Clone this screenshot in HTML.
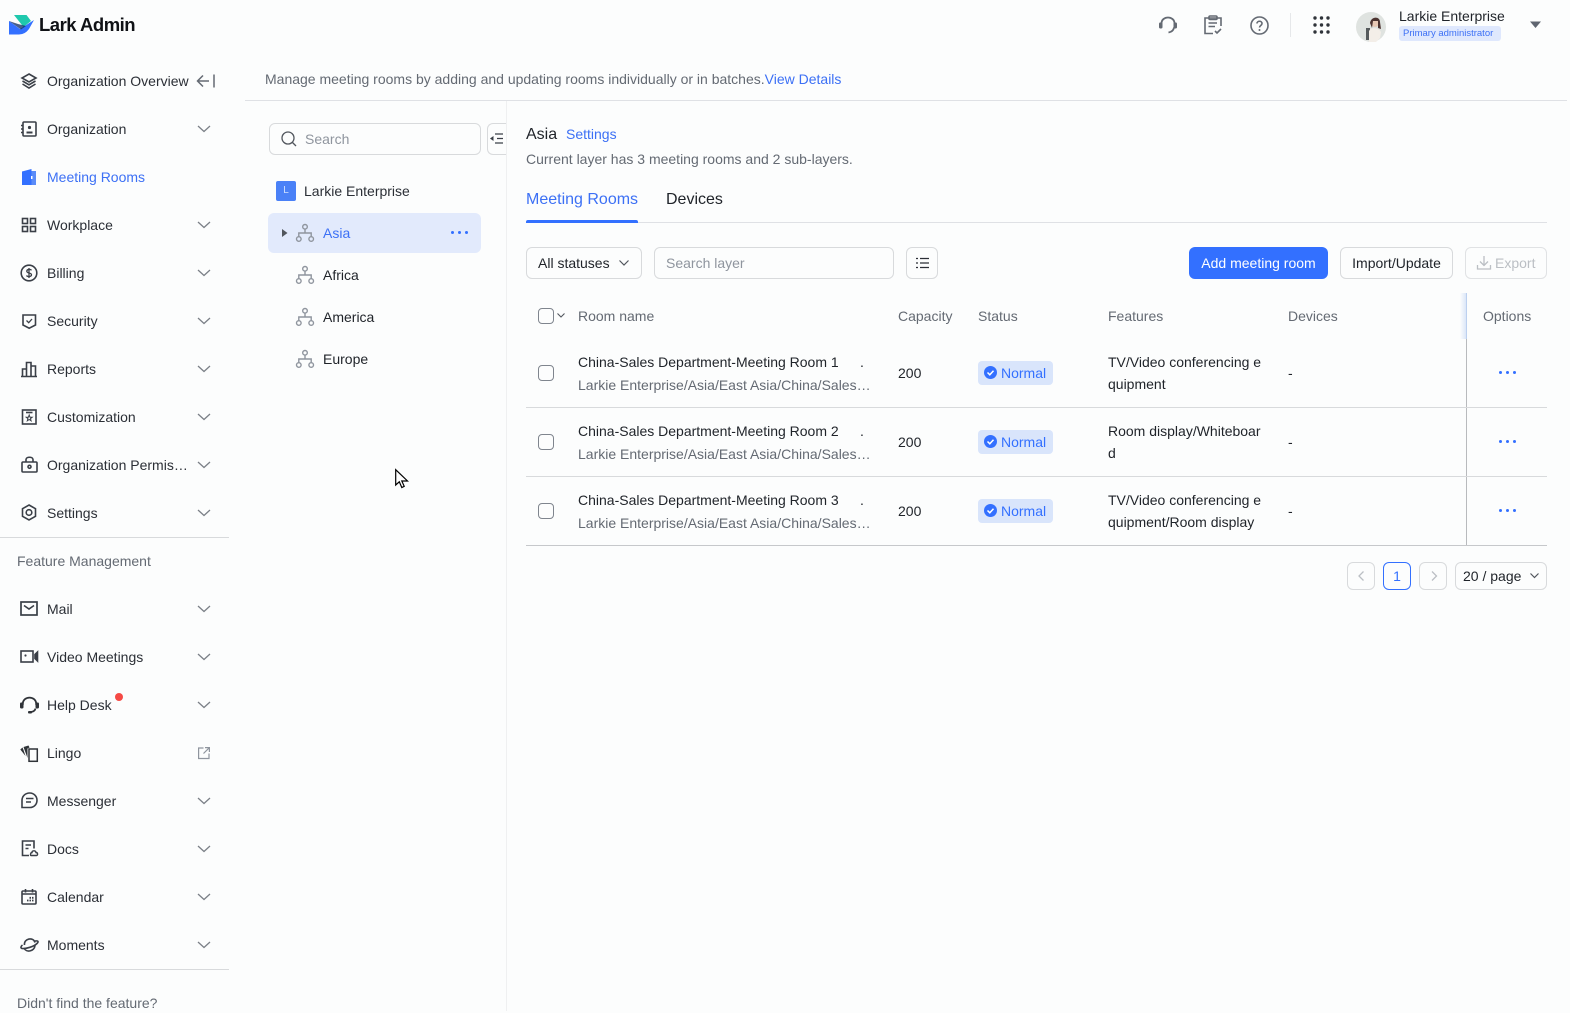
<!DOCTYPE html>
<html><head><meta charset="utf-8"><style>
*{box-sizing:border-box}
html,body{margin:0;padding:0}
body{width:1570px;height:1011px;overflow:hidden;background:#fcfdfd;font:14px/20px "Liberation Sans",sans-serif;color:#1f2329;position:relative}
.a{position:absolute;white-space:nowrap}
svg{position:absolute;overflow:visible}
.m{left:47px;color:#2b2f36}
.g{color:#646a73}
.bd{position:absolute;border:1px solid #d8dadc;border-radius:6px;background:#fcfdfd}
.i{fill:none;stroke:#3a3f47;stroke-width:1.6}
.ch{fill:none;stroke:#7b8087;stroke-width:1.3}
.tree{fill:none;stroke:#8f959e;stroke-width:1.4}
.st{position:absolute;left:978px;width:75px;height:24px;background:#d9e5fb;border-radius:4px;color:#3370ff;padding:2px 0 0 23px}
.dots{position:absolute;display:flex;gap:4px}
.dots i{width:3px;height:3px;border-radius:50%;background:#3370ff;display:block}
.hl{position:absolute;height:1px;background:#d8dadc}
.cb{position:absolute;left:538px;width:16px;height:16px;border:1px solid #7f858e;border-radius:4px}
</style></head><body>

<!-- logo -->
<svg style="left:9px;top:15px" width="26" height="20" viewBox="0 0 26 20"><path d="M5 0H17.5L22 6 14.5 12Z" fill="#1fc8ad"/><path d="M0 6 11 14 25 5 20 14Q16 19.5 10 19.5H0Z" fill="#3370ff"/><path d="M0 6 12 14.500 17 11 9 9Z" fill="#0b2a63" opacity=".75"/></svg>
<div class="a" style="left:39px;top:13px;font-size:18.500px;line-height:24px;font-weight:700;color:#101216;letter-spacing:-.5px">Lark Admin</div>

<!-- nav -->
<svg style="left:21px;top:73px" width="16" height="16" viewBox="0 0 16 16" class="i"><path d="M8 1 15 5 8 9 1 5Z M1.500 8 8 11.800 14.500 8 M1.500 11 8 15 14.500 11"/></svg>
<div class="a m" style="top:71px">Organization Overview</div>
<svg style="left:196px;top:73px" width="20" height="16" viewBox="0 0 20 16" fill="none" stroke="#646a73" stroke-width="1.500"><path d="M13 8H1.500M7 2.500 1.500 8 7 13.500M18 1.500V14.500"/></svg>

<svg style="left:21px;top:121px" width="16" height="16" viewBox="0 0 16 16" class="i"><rect x="2" y="1" width="13" height="14" rx="1"/><circle cx="8.500" cy="6.500" r="1.600" fill="#3a3f47" stroke="none"/><path d="M5.500 11.500h6" stroke-width="2"/><path d="M0 4.500h2.500M0 8h2.500M0 11.500h2.500"/></svg>
<div class="a m" style="top:119px">Organization</div>

<svg style="left:22px;top:169px" width="14" height="16" viewBox="0 0 14 16"><path d="M0 2.500 9.500 0V16H0Z" fill="#3370ff"/><path d="M9.500 2H14V16H9.500Z" fill="#5b8cf8"/><rect x="9" y="7" width="1.500" height="3" fill="#fff"/></svg>
<div class="a" style="left:47px;top:167px;color:#3c70f5">Meeting Rooms</div>

<svg style="left:21px;top:217px" width="16" height="16" viewBox="0 0 16 16" class="i"><rect x="1.500" y="1.500" width="5" height="5"/><rect x="9.500" y="1.500" width="5" height="5"/><rect x="1.500" y="9.500" width="5" height="5"/><rect x="9.500" y="9.500" width="5" height="5"/></svg>
<div class="a m" style="top:215px">Workplace</div>

<svg style="left:20px;top:264px" width="18" height="18" viewBox="0 0 18 18" class="i"><circle cx="9" cy="9" r="7.800"/><path d="M11.500 6.300C10.500 5 6.800 5 6.800 7.200 6.800 9.500 11.500 8.500 11.500 10.800 11.500 13 7.500 13 6.500 11.500M9 4V14" stroke-width="1.300"/></svg>
<div class="a m" style="top:263px">Billing</div>

<svg style="left:21px;top:313px" width="16" height="16" viewBox="0 0 16 16" class="i"><path d="M2 2H14.500V12L8.200 15.200 2 12Z"/><path d="M5.500 7.500 7.700 9.700 11 6" stroke-width="1.300"/></svg>
<div class="a m" style="top:311px">Security</div>

<svg style="left:21px;top:361px" width="16" height="16" viewBox="0 0 16 16" class="i"><path d="M0 15.500H16M1.500 15V8H5.500V15M5.500 15V1.500H10V15M10 5H14.500V15"/></svg>
<div class="a m" style="top:359px">Reports</div>

<svg style="left:21px;top:409px" width="16" height="16" viewBox="0 0 16 16" class="i"><rect x="1.500" y="1" width="13.500" height="14"/><path d="M5 3.500H11.500" /><path d="M8.200 6 9 8.200H11.200L9.500 9.600 10.100 11.800 8.200 10.500 6.300 11.800 6.900 9.600 5.200 8.200H7.400Z" stroke-width="1"/></svg>
<div class="a m" style="top:407px">Customization</div>

<svg style="left:21px;top:456px" width="17" height="17" viewBox="0 0 17 17" class="i"><rect x="1" y="6" width="15" height="10" rx="1"/><path d="M5 6V3.500C5 .500 12 .500 12 3.500V6"/><circle cx="8.500" cy="10.800" r="1.500"/></svg>
<div class="a m" style="top:455px;width:141px;overflow:hidden;text-overflow:ellipsis">Organization Permissions</div>

<svg style="left:21px;top:504px" width="16" height="17" viewBox="0 0 16 17" class="i"><path d="M8 1 14.500 4.700V12.300L8 16 1.500 12.300V4.700Z"/><circle cx="8" cy="8.500" r="2.800"/></svg>
<div class="a m" style="top:503px">Settings</div>

<div class="hl" style="left:0;top:537px;width:229px"></div>
<div class="a g" style="left:17px;top:551px">Feature Management</div>

<svg style="left:20px;top:601px" width="18" height="15" viewBox="0 0 18 15" class="i"><rect x="1" y="1" width="16" height="13" stroke-width="1.700"/><path d="M4 4.500 9 8 14 4.500"/></svg>
<div class="a m" style="top:599px">Mail</div>

<svg style="left:20px;top:650px" width="19" height="13" viewBox="0 0 19 13" class="i"><rect x="1" y="1" width="12" height="11"/><circle cx="5.500" cy="5.500" r="1.100" fill="#3a3f47" stroke="none"/><path d="M15 4.500 17.500 2V11L15 8.500Z" fill="#3a3f47"/></svg>
<div class="a m" style="top:647px">Video Meetings</div>

<svg style="left:20px;top:696px" width="19" height="18" viewBox="0 0 19 18" fill="none" stroke="#2f3338" stroke-width="1.800"><path d="M2.800 9V8C2.800 -.5 16.200 -.5 16.200 8V9"/><path d="M15.500 12.500C15 15 13 16 9.500 16"/><rect x="0" y="6.500" width="3.500" height="6" rx="1.200" fill="#2f3338" stroke="none"/><rect x="15.500" y="6.500" width="3.500" height="6" rx="1.200" fill="#2f3338" stroke="none"/><rect x="8" y="15" width="4" height="2.500" rx="1" fill="#2f3338" stroke="none"/></svg>
<div class="a m" style="top:695px">Help Desk</div>
<div class="a" style="left:115px;top:693px;width:8px;height:8px;border-radius:50%;background:#f54a45"></div>

<svg style="left:20px;top:745px" width="18" height="17" viewBox="0 0 18 17"><rect x="9" y="4" width="8.300" height="12.300" fill="none" stroke="#2f3338" stroke-width="1.500"/><path d="M8.500 .5 3.500 2 7.500 13 7.500 3.500 9.500 2.500Z M2.500 2.500 .3 4.500 5.500 11 3.500 5Z" fill="#2f3338"/></svg>
<div class="a m" style="top:743px">Lingo</div>
<svg style="left:198px;top:747px" width="12" height="12" viewBox="0 0 12 12" fill="none" stroke="#8f959e" stroke-width="1.200"><path d="M5.500 1H.6V11.500H11V6.500M7 .6H11.400V5M11.200 .8 5.500 6.500"/></svg>

<svg style="left:21px;top:792px" width="17" height="17" viewBox="0 0 17 17" class="i"><path d="M1 15.500V8.500C1 4 4.500 1 8.700 1 13 1 16 4.300 16 8.200 16 12.300 13 15.500 8.700 15.500Z"/><path d="M5 6.500H12.500M5 10H10"/></svg>
<div class="a m" style="top:791px">Messenger</div>

<svg style="left:21px;top:840px" width="17" height="17" viewBox="0 0 17 17" class="i"><path d="M8 15.500H1.500V1H13V8.500"/><path d="M4.500 5H10M4.500 8.500H7.500"/><path d="M10 15.500H15.500C17 15.500 17 12.500 15 12.500 14.500 10 11 10.500 11 12.500 9.500 12.500 9 15.500 10 15.500Z" stroke-width="1.400"/></svg>
<div class="a m" style="top:839px">Docs</div>

<svg style="left:21px;top:889px" width="16" height="16" viewBox="0 0 16 16" class="i"><rect x="1" y="2" width="14" height="13" rx="1"/><path d="M4.500 0V3.500M11.500 0V3.500M1 5H15"/><path d="M6 11.500H7.500M8.500 11.500H10M11 11.500H12.500M8.500 8.800H10M11 8.800H12.500" stroke-width="1.800"/></svg>
<div class="a m" style="top:887px">Calendar</div>

<svg style="left:20px;top:937px" width="19" height="16" viewBox="0 0 19 16" class="i"><path d="M4.500 8C3.500 1.500 13.500 -.5 15 5.500M15 8.500C14.500 14.500 6 16 4 11"/><path d="M15 4C18 3.500 19 4.500 17 6.500 14 9.500 6 12 2 11.500 .5 11 .5 9.500 2.500 8"/></svg>
<div class="a m" style="top:935px">Moments</div>

<div class="hl" style="left:0;top:969px;width:229px"></div>
<div class="a g" style="left:17px;top:993px">Didn't find the feature?</div>

<svg style="left:0;top:0" width="229" height="960" class="ch"><path d="M198 126l6 5.500 6-5.500M198 222l6 5.500 6-5.500M198 270l6 5.500 6-5.500M198 318l6 5.500 6-5.500M198 366l6 5.500 6-5.500M198 414l6 5.500 6-5.500M198 462l6 5.500 6-5.500M198 510l6 5.500 6-5.500M198 606l6 5.500 6-5.500M198 654l6 5.500 6-5.500M198 702l6 5.500 6-5.500M198 798l6 5.500 6-5.500M198 846l6 5.500 6-5.500M198 894l6 5.500 6-5.500M198 942l6 5.500 6-5.500"/></svg>

<!-- top bar -->
<svg style="left:1159px;top:16px" width="18" height="18" viewBox="0 0 18 18" fill="none" stroke="#646a73" stroke-width="1.800"><path d="M2.500 8V7.500C2.500 -.5 15.500 -.5 15.500 7.500V8"/><path d="M15 11.500C14.500 14.500 12.500 16 9.500 16.500"/><rect x="0" y="6.500" width="3.500" height="6" rx="1.200" fill="#646a73" stroke="none"/><rect x="14.500" y="6.500" width="3.500" height="6" rx="1.200" fill="#646a73" stroke="none"/></svg>
<svg style="left:1204px;top:15px" width="18" height="20" viewBox="0 0 18 20" fill="none" stroke="#646a73" stroke-width="1.600"><path d="M9 18.500H1V3H17V11"/><rect x="5" y="1" width="8" height="3.500" rx="1"/><path d="M4.500 8H13M4.500 11.500H11M11 16 13 18 17 14"/></svg>
<svg style="left:1250px;top:16px" width="19" height="19" viewBox="0 0 19 19" fill="none" stroke="#646a73" stroke-width="1.600"><circle cx="9.500" cy="9.500" r="8.500"/><path d="M7 7.500C7 4.500 12 4.500 12 7.500 12 9.500 9.500 9.500 9.500 11.500"/><circle cx="9.500" cy="14" r="1" fill="#646a73" stroke="none"/></svg>
<div class="a" style="left:1290px;top:13px;width:1px;height:24px;background:#e6e8ea"></div>
<svg style="left:1313px;top:16px" width="17" height="18" fill="#30343a"><circle cx="2" cy="2" r="1.700"/><circle cx="8.500" cy="2" r="1.700"/><circle cx="15" cy="2" r="1.700"/><circle cx="2" cy="9" r="1.700"/><circle cx="8.500" cy="9" r="1.700"/><circle cx="15" cy="9" r="1.700"/><circle cx="2" cy="16" r="1.700"/><circle cx="8.500" cy="16" r="1.700"/><circle cx="15" cy="16" r="1.700"/></svg>
<svg style="left:1356px;top:12px" width="30" height="30" viewBox="0 0 30 30"><circle cx="15" cy="15" r="15" fill="#dfe3e0"/><path d="M10 28V16H14V28Z" fill="#555a5c"/><path d="M13 30V19C15 15 22 15 25 20L24 26 20 30Z" fill="#f3eee8"/><circle cx="19" cy="11" r="4" fill="#e8c9b5"/><path d="M14 11C15 4 24 4 24 10L25 17 22 16 22 9 17 9 16 16Z" fill="#4c3431"/></svg>
<div class="a" style="left:1399px;top:6px">Larkie Enterprise</div>
<div class="a" style="left:1399px;top:26px;width:102px;height:15px;background:#dfe8fd;border-radius:3px;color:#3c70f5;font-size:9.500px;line-height:15px;padding-left:4px">Primary administrator</div>
<svg style="left:1530px;top:21px" width="12" height="8"><path d="M0 .5H11L5.500 7Z" fill="#5f6570"/></svg>

<!-- frame lines -->
<div class="hl" style="left:245px;top:100px;width:1322px;background:#dfe1e5"></div>
<div class="a" style="left:506px;top:101px;width:1px;height:910px;background:#eff0f1"></div>
<div class="a g" style="left:265px;top:69px">Manage meeting rooms by adding and updating rooms individually or in batches.<span style="color:#3c70f5">View Details</span></div>

<!-- tree -->
<div class="bd" style="left:269px;top:123px;width:212px;height:32px"></div>
<svg style="left:281px;top:131px" width="16" height="16" fill="none" stroke="#51565d" stroke-width="1.300"><circle cx="7" cy="7" r="6"/><path d="M11.500 11.500 15 15"/></svg>
<div class="a" style="left:305px;top:129px;color:#8f959e">Search</div>
<div class="bd" style="left:487px;top:123px;width:19px;height:32px;border-right:0;border-radius:6px 0 0 6px"></div>
<svg style="left:490px;top:133px" width="13" height="12" stroke="#3a3f47" stroke-width="1.300"><path d="M5 1H13M7 5.500H13M5 10H13"/><path d="M0 5.500 3.500 3V8Z" fill="#3a3f47" stroke="none"/></svg>

<div class="a" style="left:276px;top:181px;width:20px;height:20px;background:#4a81f7;border-radius:2px;color:#cfe0ff;font-size:10px;line-height:20px;text-align:center">L</div>
<div class="a" style="left:304px;top:181px;color:#2b2f36">Larkie Enterprise</div>

<div class="a" style="left:268px;top:213px;width:213px;height:40px;background:#e2eafc;border-radius:6px"></div>
<svg style="left:282px;top:229px" width="6" height="8"><path d="M0 0 5.500 4 0 8Z" fill="#51565d"/></svg>
<div class="a" style="left:323px;top:223px;color:#3c70f5">Asia</div>
<div class="dots" style="left:451px;top:231px"><i></i><i></i><i></i></div>

<div class="a" style="left:323px;top:265px">Africa</div>
<div class="a" style="left:323px;top:307px">America</div>
<div class="a" style="left:323px;top:349px">Europe</div>
<svg style="left:296px;top:224px" width="18" height="146" class="tree"><g><circle cx="9" cy="2.800" r="2.300"/><circle cx="2.800" cy="15" r="2.300"/><circle cx="15.200" cy="15" r="2.300"/><path d="M9 5V9M2.800 12.500V9H15.200V12.500"/></g><g transform="translate(0,42)"><circle cx="9" cy="2.800" r="2.300"/><circle cx="2.800" cy="15" r="2.300"/><circle cx="15.200" cy="15" r="2.300"/><path d="M9 5V9M2.800 12.500V9H15.200V12.500"/></g><g transform="translate(0,84)"><circle cx="9" cy="2.800" r="2.300"/><circle cx="2.800" cy="15" r="2.300"/><circle cx="15.200" cy="15" r="2.300"/><path d="M9 5V9M2.800 12.500V9H15.200V12.500"/></g><g transform="translate(0,126)"><circle cx="9" cy="2.800" r="2.300"/><circle cx="2.800" cy="15" r="2.300"/><circle cx="15.200" cy="15" r="2.300"/><path d="M9 5V9M2.800 12.500V9H15.200V12.500"/></g></svg>

<!-- cursor -->
<svg style="left:395px;top:469px" width="14" height="20" viewBox="0 0 14 20"><path d="M.7.7V16L4.300 12.800 6.800 18.500 9.200 17.300 6.800 12H12.500Z" fill="#fff" stroke="#000" stroke-width="1.200"/></svg>

<!-- header -->
<div class="a" style="left:526px;top:124px;font-size:16px;line-height:22px">Asia</div>
<div class="a" style="left:566px;top:124px;color:#3c70f5">Settings</div>
<div class="a g" style="left:526px;top:149px">Current layer has 3 meeting rooms and 2 sub-layers.</div>
<div class="a" style="left:526px;top:189px;font-size:16px;line-height:22px;color:#3c70f5">Meeting Rooms</div>
<div class="a" style="left:666px;top:189px;font-size:16px;line-height:22px">Devices</div>
<div class="hl" style="left:526px;top:222px;width:1021px;background:#dfe1e5"></div>
<div class="a" style="left:526px;top:220px;width:112px;height:3px;background:#3370ff;border-radius:2px 2px 0 0"></div>

<!-- toolbar -->
<div class="bd" style="left:526px;top:247px;width:116px;height:32px"></div>
<div class="a" style="left:538px;top:253px">All statuses</div>
<svg style="left:619px;top:260px" width="10" height="6" fill="none" stroke="#51565d" stroke-width="1.200"><path d="M.5.500 5 5 9.500.500"/></svg>
<div class="bd" style="left:654px;top:247px;width:240px;height:32px"></div>
<div class="a" style="left:666px;top:253px;color:#8f959e">Search layer</div>
<div class="bd" style="left:906px;top:247px;width:32px;height:32px"></div>
<svg style="left:916px;top:257px" width="13" height="12" stroke="#2b2f36" stroke-width="1.200"><path d="M4 1.500H13M4 6H13M4 10.500H13M0 1.500H2M0 6H2M0 10.500H2"/></svg>
<div class="a" style="left:1189px;top:247px;width:139px;height:32px;background:#3370ff;border-radius:6px;color:#fff;text-align:center;line-height:32px">Add meeting room</div>
<div class="bd" style="left:1340px;top:247px;width:113px;height:32px;text-align:center;line-height:30px;color:#1f2329">Import/Update</div>
<div class="bd" style="left:1465px;top:247px;width:82px;height:32px;color:#bbbfc4;padding:5px 0 0 29px;border-color:#e0e2e4">Export</div>
<svg style="left:1477px;top:256px" width="14" height="14" fill="none" stroke="#bbbfc4" stroke-width="1.300"><path d="M7 0V9M3 5.500 7 9.500 11 5.500M.5 9V13H13.500V9"/></svg>

<!-- table head -->
<div class="cb" style="top:308px"></div>
<svg style="left:557px;top:313px" width="8" height="5" fill="none" stroke="#51565d" stroke-width="1.100"><path d="M.5.500 4 4 7.500.500"/></svg>
<div class="a g" style="left:578px;top:306px">Room name</div>
<div class="a g" style="left:898px;top:306px">Capacity</div>
<div class="a g" style="left:978px;top:306px">Status</div>
<div class="a g" style="left:1108px;top:306px">Features</div>
<div class="a g" style="left:1288px;top:306px">Devices</div>
<div class="a g" style="left:1483px;top:306px">Options</div>
<div class="a" style="left:1460px;top:293px;width:6px;height:46px;background:linear-gradient(90deg,#fcfdfd,#dbe6f8)"></div>
<div class="a" style="left:1466px;top:293px;width:1px;height:46px;background:#bcd0ef"></div>
<div class="a" style="left:1466px;top:339px;width:1px;height:206px;background:#b8babd"></div>

<!-- rows -->
<div class="cb" style="top:365px"></div>
<div class="a" style="left:578px;top:352px">China-Sales Department-Meeting Room 1</div>
<div class="a" style="left:860px;top:352px">.</div>
<div class="a g" style="left:578px;top:375px">Larkie Enterprise/Asia/East Asia/China/Sales…</div>
<div class="a" style="left:898px;top:363px">200</div>
<div class="st" style="top:361px">Normal</div>
<div class="a" style="left:1108px;top:352px">TV/Video conferencing e</div>
<div class="a" style="left:1108px;top:374px">quipment</div>
<div class="a" style="left:1288px;top:363px">-</div>
<div class="dots" style="left:1499px;top:371px"><i></i><i></i><i></i></div>
<div class="hl" style="left:526px;top:407px;width:1021px"></div>

<div class="cb" style="top:434px"></div>
<div class="a" style="left:578px;top:421px">China-Sales Department-Meeting Room 2</div>
<div class="a" style="left:860px;top:421px">.</div>
<div class="a g" style="left:578px;top:444px">Larkie Enterprise/Asia/East Asia/China/Sales…</div>
<div class="a" style="left:898px;top:432px">200</div>
<div class="st" style="top:430px">Normal</div>
<div class="a" style="left:1108px;top:421px">Room display/Whiteboar</div>
<div class="a" style="left:1108px;top:443px">d</div>
<div class="a" style="left:1288px;top:432px">-</div>
<div class="dots" style="left:1499px;top:440px"><i></i><i></i><i></i></div>
<div class="hl" style="left:526px;top:476px;width:1021px"></div>

<div class="cb" style="top:503px"></div>
<div class="a" style="left:578px;top:490px">China-Sales Department-Meeting Room 3</div>
<div class="a" style="left:860px;top:490px">.</div>
<div class="a g" style="left:578px;top:513px">Larkie Enterprise/Asia/East Asia/China/Sales…</div>
<div class="a" style="left:898px;top:501px">200</div>
<div class="st" style="top:499px">Normal</div>
<div class="a" style="left:1108px;top:490px">TV/Video conferencing e</div>
<div class="a" style="left:1108px;top:512px">quipment/Room display</div>
<div class="a" style="left:1288px;top:501px">-</div>
<div class="dots" style="left:1499px;top:509px"><i></i><i></i><i></i></div>
<div class="hl" style="left:526px;top:545px;width:1021px;background:#c6c8cb"></div>

<svg style="left:984px;top:366px" width="13" height="150"><g><circle cx="6.500" cy="6.500" r="6.500" fill="#3370ff"/><path d="M3.500 6.500 5.800 8.800 9.500 4.800" fill="none" stroke="#fff" stroke-width="1.500"/></g><g transform="translate(0,69)"><circle cx="6.500" cy="6.500" r="6.500" fill="#3370ff"/><path d="M3.500 6.500 5.800 8.800 9.500 4.800" fill="none" stroke="#fff" stroke-width="1.500"/></g><g transform="translate(0,138)"><circle cx="6.500" cy="6.500" r="6.500" fill="#3370ff"/><path d="M3.500 6.500 5.800 8.800 9.500 4.800" fill="none" stroke="#fff" stroke-width="1.500"/></g></svg>

<!-- pagination -->
<div class="bd" style="left:1347px;top:562px;width:28px;height:28px"></div>
<svg style="left:1358px;top:571px" width="7" height="10" fill="none" stroke="#bbbfc4" stroke-width="1.300"><path d="M5.500.500 1 5 5.500 9.500"/></svg>
<div class="bd" style="left:1383px;top:562px;width:28px;height:28px;border-color:#3370ff;color:#3370ff;text-align:center;line-height:26px">1</div>
<div class="bd" style="left:1419px;top:562px;width:28px;height:28px"></div>
<svg style="left:1431px;top:571px" width="7" height="10" fill="none" stroke="#bbbfc4" stroke-width="1.300"><path d="M1 .5 5.500 5 1 9.500"/></svg>
<div class="bd" style="left:1455px;top:562px;width:92px;height:28px;padding:3px 0 0 7px;color:#1f2329">20 / page</div>
<svg style="left:1530px;top:573px" width="9" height="6" fill="none" stroke="#51565d" stroke-width="1.200"><path d="M.5.500 4.500 4.500 8.500.500"/></svg>

</body></html>
